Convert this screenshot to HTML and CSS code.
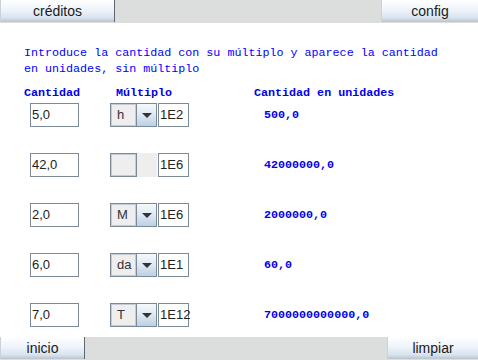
FILE: index.html
```html
<!DOCTYPE html>
<html lang="es">
<head>
  <meta charset="UTF-8" />
  <meta name="viewport" content="width=device-width, initial-scale=1.0"/>
  <title>Múltiplos</title>
  <link rel="stylesheet" href="styles.css">
</head>
<body>
  <div class="app">
    <div class="bar">
      <button class="btn btn-creditos">créditos</button>
      <button class="btn btn-config">config</button>
    </div>

    <div class="main">
      <p class="intro">Introduce la cantidad con su múltiplo y aparece la cantidad<br>en unidades, sin múltiplo</p>

      <div class="heads">
        <span class="h-qty">Cantidad</span>
        <span class="h-mul">Múltiplo</span>
        <span class="h-res">Cantidad en unidades</span>
      </div>

      <div class="rows">
        <div class="row">
          <div class="field qty">5,0</div>
          <div class="combo"><span class="combo-val">h</span><span class="combo-arrow"></span></div>
          <div class="field exp">1E2</div>
          <div class="result">500,0</div>
        </div>

        <div class="row">
          <div class="field qty">42,0</div>
          <div class="combo"><span class="combo-val"></span><span class="combo-gap"></span></div>
          <div class="field exp">1E6</div>
          <div class="result">42000000,0</div>
        </div>

        <div class="row">
          <div class="field qty">2,0</div>
          <div class="combo"><span class="combo-val">M</span><span class="combo-arrow"></span></div>
          <div class="field exp">1E6</div>
          <div class="result">2000000,0</div>
        </div>

        <div class="row">
          <div class="field qty">6,0</div>
          <div class="combo"><span class="combo-val">da</span><span class="combo-arrow"></span></div>
          <div class="field exp">1E1</div>
          <div class="result">60,0</div>
        </div>

        <div class="row">
          <div class="field qty">7,0</div>
          <div class="combo"><span class="combo-val">T</span><span class="combo-arrow"></span></div>
          <div class="field exp">1E12</div>
          <div class="result">7000000000000,0</div>
        </div>
      </div>
    </div>

    <div class="bar">
      <button class="btn btn-inicio">inicio</button>
      <button class="btn btn-limpiar">limpiar</button>
    </div>
  </div>
</body>
</html>
```

FILE: styles.css
```css
body {
  margin: 0;
  background: #fff;
  font-family: 'Liberation Sans', Arial, sans-serif;
}
.app {
  width: 478px;
  height: 360px;
  display: flex;
  flex-direction: column;
}
.bar {
  flex-shrink: 0;
  height: 23px;
  background: #dcdddd;
  display: flex;
  justify-content: space-between;
}
.btn {
  height: 22px;
  margin: 0;
  padding: 0;
  border: none;
  border-right: 1px solid #62676d;
  border-left: 1px solid #c9d2db;
  background: linear-gradient(#ffffff, #eef4fb 45%, #d9e4ef 80%, #b9c4cf);
  font-family: 'Liberation Sans', Arial, sans-serif;
  font-size: 14px;
  color: #1a1a1a;
  cursor: pointer;
}
.btn-creditos { width: 115px; }
.btn-config { width: 97px; border-right: none; }
.btn-inicio { width: 85px; }
.btn-limpiar { width: 91px; border-right: none; }

.main {
  flex: 1;
  min-height: 0;
  overflow: hidden;
}
.intro {
  margin: 22px 0 0 24px;
  font-family: 'Liberation Mono', 'Courier New', monospace;
  font-size: 11.7px;
  line-height: 16px;
  color: #0000ff;
}
.heads {
  display: flex;
  margin-top: 8px;
  padding-left: 24px;
  font-family: 'Liberation Mono', 'Courier New', monospace;
  font-weight: bold;
  font-size: 11.7px;
  line-height: 16px;
  color: #0000ee;
}
.h-qty { width: 92px; }
.h-mul { width: 138px; }

.rows {
  display: flex;
  flex-direction: column;
  gap: 26px;
  margin-top: 2px;
  padding-left: 30px;
}
.row {
  display: flex;
  align-items: center;
  height: 24px;
}
.field {
  box-sizing: border-box;
  height: 24px;
  border: 1px solid #7a8a99;
  background: #fff;
  padding-left: 1px;
  font-size: 13px;
  line-height: 22px;
  color: #222;
}
.qty {
  width: 49px;
  margin-right: 31px;
}
.combo {
  display: flex;
  width: 47px;
  height: 24px;
  margin-right: 1px;
}
.combo-val {
  box-sizing: border-box;
  width: 27px;
  height: 24px;
  border: 1px solid #7a8a99;
  box-shadow: inset 0 0 0 1px #c3ccd6;
  background: #eeeeee;
  padding-left: 6px;
  font-size: 13px;
  line-height: 22px;
  color: #333;
}
.combo-arrow {
  box-sizing: border-box;
  width: 20px;
  height: 24px;
  border: 1px solid #7a8a99;
  border-left: none;
  background: linear-gradient(#f6f9fc, #dde8f3 50%, #bcd0e4);
  display: flex;
  align-items: center;
  justify-content: center;
}
.combo-arrow::after {
  content: "";
  border-left: 5px solid transparent;
  border-right: 5px solid transparent;
  border-top: 5px solid #333;
}
.combo-gap {
  width: 21px;
  height: 24px;
  background: #eeeeee;
}
.exp {
  width: 31px;
}
.result {
  margin-left: 75px;
  font-family: 'Liberation Mono', 'Courier New', monospace;
  font-weight: bold;
  font-size: 11.7px;
  color: #0000ee;
}
```
